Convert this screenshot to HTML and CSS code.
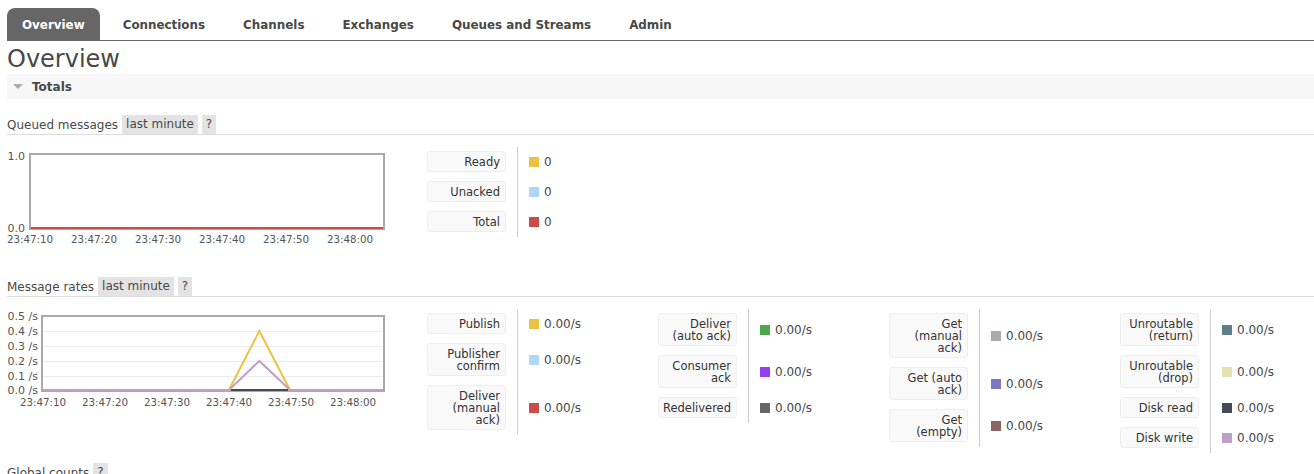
FILE: index.html
```html
<!DOCTYPE html>
<html lang="en">
<head>
<meta charset="utf-8">
<title>Overview</title>
<link rel="stylesheet" href="styles.css">
</head>
<body>
<div class="page">
  <ul class="tabs">
    <li class="tab active">Overview</li>
    <li class="tab">Connections</li>
    <li class="tab">Channels</li>
    <li class="tab">Exchanges</li>
    <li class="tab">Queues and Streams</li>
    <li class="tab">Admin</li>
  </ul>

  <h1 class="title">Overview</h1>

  <div class="totals"><span class="tri"></span><span>Totals</span></div>

  <div class="section sec-queued">
    <div class="sec-head"><span>Queued messages</span><span class="badge">last minute</span><span class="badge">?</span></div>
    <div class="sec-body">
      <svg class="chart" width="420" height="102" viewBox="0 0 420 102">
        <rect x="23" y="7" width="354" height="75" fill="#fff" stroke="#aaa" stroke-width="2"/>
        <line x1="24" y1="81" x2="376" y2="81" stroke="#cb4b4b" stroke-width="2"/>
        <text class="ylab" x="18" y="13" text-anchor="end">1.0</text>
        <text class="ylab" x="18" y="85" text-anchor="end">0.0</text>
        <text class="xlab" x="23" y="96" text-anchor="middle">23:47:10</text>
        <text class="xlab" x="87" y="96" text-anchor="middle">23:47:20</text>
        <text class="xlab" x="151" y="96" text-anchor="middle">23:47:30</text>
        <text class="xlab" x="215" y="96" text-anchor="middle">23:47:40</text>
        <text class="xlab" x="279" y="96" text-anchor="middle">23:47:50</text>
        <text class="xlab" x="343" y="96" text-anchor="middle">23:48:00</text>
      </svg>
      <div class="legends">
        <table class="legend">
          <tr><th><span class="lbl">Ready</span></th><td><span class="sw" style="background:#edc240"></span>0</td></tr>
          <tr><th><span class="lbl">Unacked</span></th><td><span class="sw" style="background:#afd8f8"></span>0</td></tr>
          <tr><th><span class="lbl">Total</span></th><td><span class="sw" style="background:#cb4b4b"></span>0</td></tr>
        </table>
      </div>
    </div>
  </div>

  <div class="section sec-rates">
    <div class="sec-head"><span>Message rates</span><span class="badge">last minute</span><span class="badge">?</span></div>
    <div class="sec-body">
      <svg class="chart" width="420" height="102" viewBox="0 0 420 102">
        <rect x="35" y="7" width="342" height="75" fill="#fff" stroke="#aaa" stroke-width="2"/>
        <g stroke="#ececec" stroke-width="1">
          <line x1="36" y1="22.5" x2="376" y2="22.5"/>
          <line x1="36" y1="37.5" x2="376" y2="37.5"/>
          <line x1="36" y1="52.5" x2="376" y2="52.5"/>
          <line x1="36" y1="67.5" x2="376" y2="67.5"/>
        </g>
        <polyline points="36,81 222,81 252.3,22 283,81 376,81" fill="none" stroke="#edc240" stroke-width="2"/>
        <polyline points="36,81 222,81 252.3,52 283,81 376,81" fill="none" stroke="#bf9fc8" stroke-width="2"/>
        <line x1="224" y1="81" x2="281" y2="81" stroke="#494858" stroke-width="2"/>
        <text class="ylab" x="31" y="11" text-anchor="end">0.5 /s</text>
        <text class="ylab" x="31" y="26" text-anchor="end">0.4 /s</text>
        <text class="ylab" x="31" y="41" text-anchor="end">0.3 /s</text>
        <text class="ylab" x="31" y="56" text-anchor="end">0.2 /s</text>
        <text class="ylab" x="31" y="71" text-anchor="end">0.1 /s</text>
        <text class="ylab" x="31" y="85" text-anchor="end">0.0 /s</text>
        <text class="xlab" x="36" y="97" text-anchor="middle">23:47:10</text>
        <text class="xlab" x="98" y="97" text-anchor="middle">23:47:20</text>
        <text class="xlab" x="160" y="97" text-anchor="middle">23:47:30</text>
        <text class="xlab" x="222" y="97" text-anchor="middle">23:47:40</text>
        <text class="xlab" x="284" y="97" text-anchor="middle">23:47:50</text>
        <text class="xlab" x="346" y="97" text-anchor="middle">23:48:00</text>
      </svg>
      <div class="legends">
        <table class="legend">
          <tr><th><span class="lbl">Publish</span></th><td><span class="sw" style="background:#edc240"></span>0.00/s</td></tr>
          <tr><th><span class="lbl">Publisher<br>confirm</span></th><td><span class="sw" style="background:#afd8f8"></span>0.00/s</td></tr>
          <tr><th><span class="lbl">Deliver<br>(manual<br>ack)</span></th><td><span class="sw" style="background:#cb4b4b"></span>0.00/s</td></tr>
        </table>
        <table class="legend">
          <tr><th><span class="lbl">Deliver<br>(auto ack)</span></th><td><span class="sw" style="background:#4da74d"></span>0.00/s</td></tr>
          <tr><th><span class="lbl">Consumer<br>ack</span></th><td><span class="sw" style="background:#9440ed"></span>0.00/s</td></tr>
          <tr><th><span class="lbl">Redelivered</span></th><td><span class="sw" style="background:#666666"></span>0.00/s</td></tr>
        </table>
        <table class="legend">
          <tr><th><span class="lbl">Get<br>(manual<br>ack)</span></th><td><span class="sw" style="background:#aaaaaa"></span>0.00/s</td></tr>
          <tr><th><span class="lbl">Get (auto<br>ack)</span></th><td><span class="sw" style="background:#7c79c3"></span>0.00/s</td></tr>
          <tr><th><span class="lbl">Get<br>(empty)</span></th><td><span class="sw" style="background:#8c6464"></span>0.00/s</td></tr>
        </table>
        <table class="legend">
          <tr><th><span class="lbl">Unroutable<br>(return)</span></th><td><span class="sw" style="background:#627d8a"></span>0.00/s</td></tr>
          <tr><th><span class="lbl">Unroutable<br>(drop)</span></th><td><span class="sw" style="background:#e2e2b4"></span>0.00/s</td></tr>
          <tr><th><span class="lbl">Disk read</span></th><td><span class="sw" style="background:#494858"></span>0.00/s</td></tr>
          <tr><th><span class="lbl">Disk write</span></th><td><span class="sw" style="background:#bf9fc8"></span>0.00/s</td></tr>
        </table>
      </div>
    </div>
  </div>

  <div class="section sec-global">
    <div class="sec-head"><span>Global counts</span><span class="badge">?</span></div>
  </div>
</div>
</body>
</html>
```

FILE: styles.css
```css
html, body {
  margin: 0;
  padding: 0;
  background: #fff;
}
body {
  font-family: "DejaVu Sans", Verdana, sans-serif;
  font-size: 12px;
  color: #484848;
  overflow: hidden;
}
.page {
  padding: 8px 0 0 7px;
}
.tabs {
  list-style: none;
  margin: 0;
  padding: 0;
  display: flex;
  border-bottom: 1px solid #666;
}
.tab {
  height: 32px;
  box-sizing: border-box;
  padding: 2px 15px 0;
  line-height: 30px;
  margin-right: 8px;
  font-size: 11.9px;
  font-weight: bold;
  color: #484848;
  border-radius: 8px 8px 0 0;
}
.tab.active {
  background: #666;
  color: #fff;
}
.title {
  margin: 5px 0 1px;
  font-size: 24px;
  line-height: 27px;
  font-weight: normal;
  color: #484848;
}
.totals {
  height: 25px;
  display: flex;
  align-items: center;
  padding-left: 6px;
  background: #f7f7f7;
  font-weight: bold;
  color: #484848;
}
.tri {
  width: 0;
  height: 0;
  border-left: 5px solid transparent;
  border-right: 5px solid transparent;
  border-top: 5px solid #aaa;
  margin-right: 9px;
}
.section {
  margin-top: 16px;
}
.sec-rates,
.sec-global {
  margin-top: 0;
}
.sec-queued {
  margin-bottom: 28px;
}
.sec-rates {
  margin-bottom: 10px;
}
.sec-head {
  display: flex;
  align-items: center;
  gap: 4px;
  height: 19px;
  border-bottom: 1px solid #ddd;
  white-space: nowrap;
}
.badge {
  background: #e3e3e3;
  line-height: 19px;
  padding: 0 4px;
}
.sec-body {
  display: flex;
  align-items: flex-start;
  padding-top: 12px;
}
.chart {
  display: block;
  flex: none;
}
.ylab {
  font-family: "DejaVu Sans", Verdana, sans-serif;
  font-size: 11px;
  fill: #545454;
}
.xlab {
  font-family: "DejaVu Sans", Verdana, sans-serif;
  font-size: 10.3px;
  fill: #545454;
}
.legends {
  display: flex;
  align-items: flex-start;
}
.legend {
  width: 231px;
  border-collapse: collapse;
  border-spacing: 0;
  flex: none;
}
.legend th {
  width: 79px;
  padding: 4px 11px 5px 0;
  vertical-align: top;
  font-weight: normal;
}
.legend td {
  border-left: 1px solid #ccc;
  padding: 4px 0 5px 11px;
  vertical-align: middle;
  font-size: 12px;
  white-space: nowrap;
}
.lbl {
  display: block;
  box-sizing: border-box;
  width: 79px;
  padding: 4px 5px 3px 3px;
  border: 1px solid #eee;
  border-radius: 3px;
  background: #f9f9f9;
  font-size: 11.5px;
  line-height: 12px;
  text-align: right;
  white-space: nowrap;
  color: #333;
}
.sw {
  display: inline-block;
  width: 10px;
  height: 10px;
  margin-right: 5px;
  vertical-align: -1px;
}
```
